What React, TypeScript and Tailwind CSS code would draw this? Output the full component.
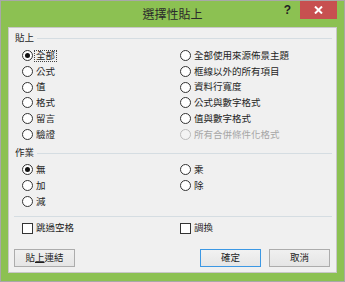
import React from 'react';

type Opt = { label: string; checked?: boolean; disabled?: boolean; focus?: boolean };

const Radio: React.FC<Opt> = ({ label, checked, disabled, focus }) => (
  <div className={`flex items-center h-[15.7px] ${focus ? 'gap-[1px]' : 'gap-[3px]'}`}>
    <span
      className={`w-[11px] h-[11px] rounded-full border flex items-center justify-center shrink-0 ${
        disabled ? 'border-[#bcbcbc] bg-[#f4f4f4]' : 'border-[#333] bg-white'
      }`}
    >
      {checked && <span className="w-[5px] h-[5px] rounded-full bg-[#111]" />}
    </span>
    <span
      className={`leading-none whitespace-nowrap ${disabled ? 'text-[#a6a6a6]' : 'text-[#1e1e1e]'} ${
        focus ? 'border border-dotted border-[#444] px-[1px] py-[0.5px]' : ''
      }`}
    >
      {label}
    </span>
  </div>
);

const Checkbox: React.FC<{ label: string }> = ({ label }) => (
  <div className="flex items-center gap-[3px] h-[15px]">
    <span className="w-[11px] h-[11px] border border-[#333] bg-white shrink-0" />
    <span className="leading-none whitespace-nowrap text-[#1e1e1e]">{label}</span>
  </div>
);

const GroupHeader: React.FC<{ title: string }> = ({ title }) => (
  <div className="flex items-center h-[14px] pl-[6px] pr-[4px]">
    <span className="leading-none text-[#1e1e1e]">{title}</span>
    <div className="flex-1 h-px bg-[#d5dde2] ml-[3px]" />
  </div>
);

const Button: React.FC<{ children: React.ReactNode; primary?: boolean }> = ({ children, primary }) => (
  <button
    className={`w-[61px] h-[18px] flex items-center justify-center border leading-none text-[#1e1e1e] bg-gradient-to-b ${
      primary
        ? 'border-[#3c98e4] from-[#f2f2f2] to-[#e6e6e6]'
        : 'border-[#acacac] from-[#f0f0f0] to-[#e5e5e5]'
    }`}
  >
    {children}
  </button>
);

const pasteLeft: Opt[] = [
  { label: '全部', checked: true, focus: true },
  { label: '公式' },
  { label: '值' },
  { label: '格式' },
  { label: '留言' },
  { label: '驗證' },
];

const pasteRight: Opt[] = [
  { label: '全部使用來源佈景主題' },
  { label: '框線以外的所有項目' },
  { label: '資料行寬度' },
  { label: '公式與數字格式' },
  { label: '值與數字格式' },
  { label: '所有合併條件化格式', disabled: true },
];

const App: React.FC = () => {
  return (
    <div
      className="w-[345px] h-[282px] border border-[#a8a8a8] bg-[#8cc152] flex flex-col text-[9.5px]"
      style={{ fontFamily: '"Noto Sans CJK TC", "Noto Sans", sans-serif' }}
    >
      {/* Title bar */}
      <div className="h-[26px] grid grid-cols-[1fr_auto_1fr] items-start">
        <div />
        <div className="h-[26px] flex items-center text-[12px] text-[#2b2b2b] leading-none">選擇性貼上</div>
        <div className="flex justify-end items-center mr-[7px]">
          <span className="mr-[9px] text-[12px] font-bold text-[#222] leading-none" style={{ fontFamily: '"Liberation Sans", sans-serif' }}>
            ?
          </span>
          <div className="w-[37px] h-[18px] bg-[#c75050] flex items-center justify-center">
            <svg width="9" height="8" viewBox="0 0 9 8">
              <path d="M1 0.5 L8 7.5 M8 0.5 L1 7.5" stroke="white" strokeWidth="2" />
            </svg>
          </div>
        </div>
      </div>

      {/* Panel */}
      <div className="mx-[7px] h-[246px] border border-[#c8c8c8] bg-[#f0f0f0] flex flex-col pt-[3px]">
        <GroupHeader title="貼上" />
        <div className="mt-[3px] pl-[13px] grid grid-cols-[158px_1fr]">
          <div className="flex flex-col">
            {pasteLeft.map((o) => (
              <Radio key={o.label} {...o} />
            ))}
          </div>
          <div className="flex flex-col">
            {pasteRight.map((o) => (
              <Radio key={o.label} {...o} />
            ))}
          </div>
        </div>

        <div className="mt-[4px]">
          <GroupHeader title="作業" />
        </div>
        <div className="mt-[2px] pl-[13px] grid grid-cols-[158px_1fr]">
          <div className="flex flex-col">
            <Radio label="無" checked />
            <Radio label="加" />
            <Radio label="減" />
          </div>
          <div className="flex flex-col">
            <Radio label="乘" />
            <Radio label="除" />
          </div>
        </div>

        <div className="mt-[6.5px] mx-[5px] mr-[4px] h-px bg-[#d5dde2]" />

        <div className="mt-[4px] pl-[13px] grid grid-cols-[158px_1fr]">
          <Checkbox label="跳過空格" />
          <Checkbox label="調換" />
        </div>

        <div className="mt-[13px] pl-[5px] pr-[6px] flex items-center">
          <Button>
            <span>
              貼<span className="underline underline-offset-[1px]">上</span>連結
            </span>
          </Button>
          <div className="flex-1" />
          <div className="flex gap-[8px]">
            <Button primary>確定</Button>
            <Button>取消</Button>
          </div>
        </div>
      </div>
    </div>
  );
};

export default App;
